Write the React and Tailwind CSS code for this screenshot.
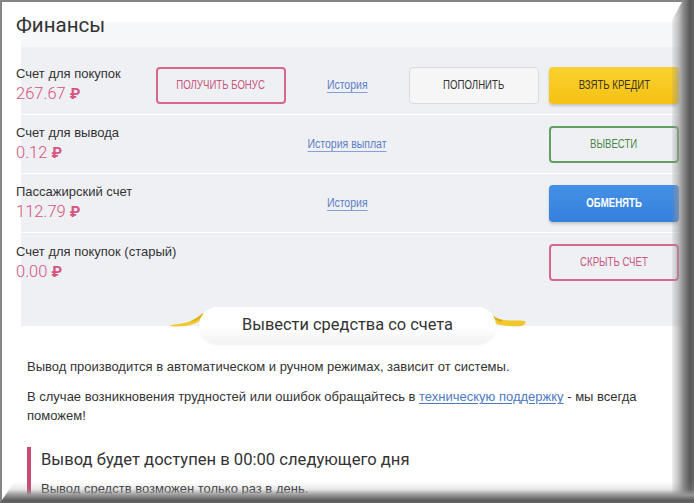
import React from "react";

const cond = "font-['Liberation_Sans',sans-serif]";

function Btn({ kind, children }) {
  const base = `w-[130px] h-[37px] rounded-[4px] flex items-center justify-center ${cond} text-[12.5px] uppercase`;
  const styles = {
    pink: "border-2 border-[#d5688c] text-[#c6577d]",
    green: "border-2 border-[#62a062] text-[#4b884b]",
    gray: "border border-[#dadbdd] bg-[#f6f6f7] text-[#333]",
    yellow: "bg-[linear-gradient(#fbd130,#f4c113)] text-[#3a3520] shadow-[0_2px_3px_rgba(0,0,0,0.18)]",
    blue: "bg-[linear-gradient(#4590e6,#3480dc)] text-white font-bold shadow-[0_2px_3px_rgba(0,0,0,0.18)]",
  };
  return (
    <div className={`${base} ${styles[kind]}`}>
      <span className="inline-block whitespace-nowrap scale-x-[0.77]">{children}</span>
    </div>
  );
}

function Link({ children }) {
  return (
    <span className={`inline-block whitespace-nowrap scale-x-[0.84] ${cond} text-[12.5px] text-[#5b7ec4] underline underline-offset-[3px] decoration-[#86a0d6]`}>
      {children}
    </span>
  );
}

function Row({ label, amount, b1, link, b3, b4, last }) {
  return (
    <div className={`-ml-[5px] h-[59px] flex items-center ${last ? "" : "border-b border-white"}`}>
      <div className="w-[140px] flex flex-col">
        <div className="font-['Liberation_Sans',sans-serif] text-[13px] leading-[16px] text-[#333] whitespace-nowrap">{label}</div>
        <div className="font-['Roboto',sans-serif] font-light text-[16.5px] leading-[20px] text-[#d5537d] mt-[2px] whitespace-nowrap">
          {amount} <span className="font-bold text-[15px]">₽</span>
        </div>
      </div>
      <div className="w-[130px]">{b1}</div>
      <div className="w-[123px] flex justify-center">{link}</div>
      <div className="w-[130px]">{b3}</div>
      <div className="w-[10px]" />
      <div className="w-[130px]">{b4}</div>
    </div>
  );
}

export default function App() {
  return (
    <div className="relative w-[694px] h-[503px] overflow-hidden bg-white font-['Liberation_Sans',sans-serif]">
      <div className="relative z-10 h-[22px] pl-[16px] pt-[12px]">
        <div className="font-['Roboto',sans-serif] text-[20.5px] leading-[26px] text-[#333] whitespace-nowrap">Финансы</div>
      </div>
      <div className="ml-[21px] bg-[#eff0f4]">
        <div className="h-[34px] bg-[linear-gradient(#f6f7f9_0,#f6f7f9_25px,#eff0f4_25px)]" />
        <Row
          label="Счет для покупок"
          amount="267.67"
          b1={<Btn kind="pink">Получить бонус</Btn>}
          link={<Link>История</Link>}
          b3={<Btn kind="gray">Пополнить</Btn>}
          b4={<Btn kind="yellow">Взять кредит</Btn>}
        />
        <Row
          label="Счет для вывода"
          amount="0.12"
          link={<Link>История выплат</Link>}
          b4={<Btn kind="green">Вывести</Btn>}
        />
        <Row
          label="Пассажирский счет"
          amount="112.79"
          link={<Link>История</Link>}
          b4={<Btn kind="blue">Обменять</Btn>}
        />
        <Row
          label="Счет для покупок (старый)"
          amount="0.00"
          b4={<Btn kind="pink">Скрыть счет</Btn>}
          last
        />
      </div>
      <div className="ml-[21px] h-[52px] bg-[linear-gradient(#eff0f4_0,#eff0f4_34px,#fff_34px)]">
        <div className="-ml-[5px] w-[663px] flex justify-center pt-[15px]">
          <div className="flex items-start">
            <svg width="34" height="14" viewBox="0 0 34 14" className="mt-[6px] -mr-[4px]">
              <path d="M0 13 C6 11 14 11 22 8 C27 6 30 3 34 0 L34 5 C30 9 24 12 16 13 C10 13.5 4 13.5 0 13 Z" fill="#f1c82c" />
              <path d="M22 8 C27 6 30 3 34 0 L34 3 C30 6 27 8 22 9 Z" fill="#dcaf13" />
            </svg>
            <div className="relative z-10 w-[297px] h-[37px] rounded-full bg-[linear-gradient(#ffffff_55%,#f2f2f3)] shadow-[0_1px_2px_rgba(0,0,0,0.06)] flex items-center justify-center">
              <span className="font-['Roboto',sans-serif] text-[16.4px] text-[#333] whitespace-nowrap">Вывести средства со счета</span>
            </div>
            <svg width="37" height="14" viewBox="0 0 37 14" className="mt-[6px] -ml-[7px]">
              <path d="M0 0 C4 3 8 6 14 7 C22 8 30 7 36 8 C37 10 36 12 33 13 C24 13.5 14 13 8 11 C4 9 2 5 0 0 Z" fill="#f1c82c" />
              <path d="M0 0 C4 3 8 6 14 7 L12 9 C6 7 2 4 0 0 Z" fill="#d8ab12" />
            </svg>
          </div>
        </div>
      </div>
      <div className="pl-[27px] pr-[29px] pt-[13px] text-[13px] leading-[19px] text-[#333]">
        <p>Вывод производится в автоматическом и ручном режимах, зависит от системы.</p>
        <p className="mt-[11px]">
          В случае возникновения трудностей или ошибок обращайтесь в{" "}
          <span className="text-[#4f78c4] underline underline-offset-[2px]">техническую поддержку</span> - мы всегда
          поможем!
        </p>
        <div className="mt-[22px] border-l-4 border-[#c94a73] pl-[10px]">
          <div className="font-['Roboto',sans-serif] text-[16.6px] leading-[26px] text-[#333] whitespace-nowrap">
            Вывод будет доступен в 00:00 следующего дня
          </div>
          <div className="mt-[4px] leading-[24px]">Вывод средств возможен только раз в день.</div>
        </div>
      </div>

      {/* frame overlays */}
      <div className="pointer-events-none absolute inset-0 border-t-2 border-l-2 border-[#858585]" />
      <div className="pointer-events-none absolute right-0 top-0 bottom-0 w-[22px] bg-[linear-gradient(to_right,rgba(120,120,120,0.1),rgba(150,150,150,0.6)_30%,#858585_55%,#595959_82%,#6a6a6a)] [clip-path:polygon(11px_0,100%_0,100%_100%,0_100%,0_20px)]" />
      <div className="pointer-events-none absolute left-0 right-0 bottom-0 h-[21px] bg-[linear-gradient(to_bottom,rgba(140,140,140,0),rgba(140,140,140,0.22)_35%,#979797_62%,#5c5c5c_88%,#666)] [clip-path:polygon(14px_0,100%_0,100%_100%,0_100%)]" />
    </div>
  );
}
